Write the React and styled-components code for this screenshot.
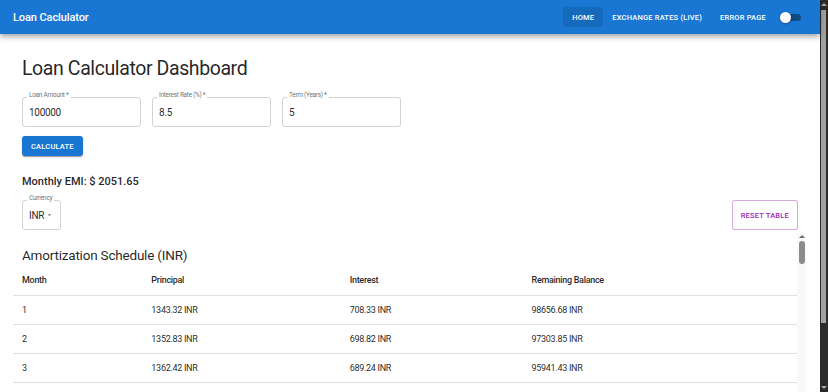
import React from "react";
import styled, { createGlobalStyle } from "styled-components";

const GlobalStyle = createGlobalStyle`
    html, body {
        margin:0;
        padding:0;
        height:100%;
        overflow:hidden;
        background:#fff;
        font-family:Roboto, "Liberation Sans", sans-serif;
        color:rgba(0,0,0,0.87);
    }
    #root{
        height:100%;
    }
`

const Shell = styled.div`
    display:flex;
    height:100%;
`

const Page = styled.div`
    flex:1;
    min-width:0;
    display:flex;
    flex-direction:column;
`

const AppBar = styled.header`
    flex:none;
    height:34px;
    background:#1976d2;
    color:#fff;
    display:flex;
    align-items:center;
    justify-content:space-between;
    padding:0 19px 0 13px;
    box-shadow:0 2px 4px -1px rgba(0,0,0,.2),0 4px 5px 0 rgba(0,0,0,.14),0 1px 10px 0 rgba(0,0,0,.12);
    position:relative;
    z-index:2;
`

const Brand = styled.div`
    font-size:11px;
    font-weight:500;
    letter-spacing:-0.1px;
`

const Nav = styled.nav`
    display:flex;
    align-items:center;
`

const NavButton = styled.button`
    height:20px;
    padding:0 9px;
    border:none;
    border-radius:3px;
    background:${p => p.$active ? "rgba(0,0,0,0.1)" : "transparent"};
    color:#fff;
    font-family:inherit;
    font-size:7.5px;
    font-weight:500;
    letter-spacing:0.2px;
    text-transform:uppercase;
`

const SwitchTrack = styled.span`
    position:relative;
    display:inline-block;
    width:21px;
    height:7px;
    border-radius:4px;
    background:rgba(0,0,0,0.38);
    margin-left:5px;
`

const SwitchThumb = styled.span`
    position:absolute;
    left:0;
    top:-2px;
    width:11px;
    height:11px;
    border-radius:50%;
    background:#fff;
    box-shadow:0 1px 2px rgba(0,0,0,.3);
`

const Main = styled.main`
    flex:1;
    min-height:0;
    display:flex;
    flex-direction:column;
    padding:23px 22px 0;
`

const PageTitle = styled.h1`
    margin:0;
    font-size:19.5px;
    font-weight:400;
    line-height:24px;
    letter-spacing:-0.4px;
`

const FieldRow = styled.div`
    display:flex;
    column-gap:11px;
    margin-top:16px;
`

const Field = styled.div`
    position:relative;
    box-sizing:border-box;
    width:${p => p.$width || 119}px;
    height:30px;
    border:1px solid #d2d2d2;
    border-radius:3px;
    display:flex;
    align-items:center;
    padding:0 6px;
    font-size:10px;
    letter-spacing:-0.3px;
`

const FieldLabel = styled.span`
    position:absolute;
    top:-7px;
    left:4px;
    padding:0 2px;
    background:#fff;
    font-size:6.5px;
    line-height:9px;
    color:rgba(0,0,0,0.6);
    white-space:nowrap;
    overflow:hidden;
    text-overflow:ellipsis;
    max-width:${p => p.$max ? p.$max + "px" : "none"};
`

const ContainedButton = styled.button`
    align-self:flex-start;
    margin-top:9px;
    height:20px;
    padding:0 9px;
    border:none;
    border-radius:3px;
    background:#1976d2;
    color:#fff;
    font-family:inherit;
    font-size:7.5px;
    font-weight:500;
    letter-spacing:0.2px;
    box-shadow:0 2px 1px -1px rgba(0,0,0,.2),0 1px 1px 0 rgba(0,0,0,.14),0 1px 3px 0 rgba(0,0,0,.12);
`

const Emi = styled.div`
    margin-top:18px;
    font-size:11px;
    font-weight:500;
    line-height:16px;
`

const ControlRow = styled.div`
    margin-top:10px;
    display:flex;
    justify-content:space-between;
    align-items:center;
`

const Caret = styled.svg`
    width:10px;
    height:10px;
    margin-left:1px;
    fill:rgba(0,0,0,0.54);
`

const OutlinedButton = styled.button`
    height:30px;
    padding:0 8px;
    border:1px solid rgba(156,39,176,0.4);
    border-radius:3px;
    background:#fff;
    color:#9c27b0;
    font-family:inherit;
    font-size:7.5px;
    font-weight:500;
    letter-spacing:0.2px;
`

const ScheduleBox = styled.section`
    flex:1;
    min-height:0;
    margin:3px -8px 0 -9px;
    display:flex;
    overflow:hidden;
`

const ScheduleContent = styled.div`
    flex:1;
    min-width:0;
`

const Rail = styled.div`
    flex:none;
    width:${p => p.$width}px;
    background:${p => p.$track};
    display:flex;
    flex-direction:column;
    align-items:center;
    padding:${p => p.$pad}px 0;
    box-sizing:border-box;
`

const RailArrow = styled.span`
    width:0;
    height:0;
    border-left:3px solid transparent;
    border-right:3px solid transparent;
    ${p => p.$down ? "border-top" : "border-bottom"}:3px solid ${p => p.$color};
`

const RailThumb = styled.span`
    width:${p => p.$width}px;
    height:${p => p.$height}px;
    margin-top:${p => p.$offset}px;
    margin-left:${p => p.$shift || 0}px;
    border-radius:${p => p.$round ? 3 : 0}px;
    background:${p => p.$color};
`

const RailSpacer = styled.span`
    flex:1;
`

const SectionTitle = styled.h2`
    margin:0;
    padding:12px 9px 0;
    font-size:13.5px;
    font-weight:400;
    line-height:20px;
    letter-spacing:-0.2px;
`

const Table = styled.table`
    width:100%;
    border-collapse:collapse;
    table-layout:fixed;
`

const Th = styled.th`
    box-sizing:border-box;
    width:${p => p.$w};
    height:30px;
    padding:0 9px;
    text-align:left;
    font-size:9px;
    font-weight:500;
    letter-spacing:-0.3px;
    border-bottom:1px solid #e0e0e0;
`

const Td = styled.td`
    height:28px;
    padding:0 9px;
    font-size:9px;
    letter-spacing:-0.3px;
    color:rgba(0,0,0,0.87);
    border-bottom:1px solid #e0e0e0;
`

const buildSchedule = (amount, rate, years) => {
    const r = rate / 12 / 100;
    const n = years * 12;
    const emi = amount * r * Math.pow(1 + r, n) / (Math.pow(1 + r, n) - 1);
    let balance = amount;
    const rows = [];
    for (let m = 1; m <= n; m++) {
        const interest = balance * r;
        const principal = emi - interest;
        balance -= principal;
        rows.push({ month: m, principal, interest, balance: Math.max(balance, 0) });
    }
    return { emi, rows };
}

const App = () => {
    const { emi, rows } = buildSchedule(100000, 8.5, 5);
    // only the rows that fit above the fold
    const visible = rows.slice(0, 3);

    return (
        <Shell>
            <GlobalStyle />
            <Page>
                <AppBar>
                    <Brand>Loan Caclulator</Brand>
                    <Nav>
                        <NavButton $active>Home</NavButton>
                        <NavButton>Exchange Rates (Live)</NavButton>
                        <NavButton>Error Page</NavButton>
                        <SwitchTrack><SwitchThumb /></SwitchTrack>
                    </Nav>
                </AppBar>
                <Main>
                    <PageTitle>Loan Calculator Dashboard</PageTitle>

                    <FieldRow>
                        <Field><FieldLabel>Loan Amount *</FieldLabel>100000</Field>
                        <Field><FieldLabel>Interest Rate (%) *</FieldLabel>8.5</Field>
                        <Field><FieldLabel>Term (Years) *</FieldLabel>5</Field>
                    </FieldRow>

                    <ContainedButton>CALCULATE</ContainedButton>

                    <Emi>Monthly EMI: $ {emi.toFixed(2)}</Emi>

                    <ControlRow>
                        <Field $width={39}>
                            <FieldLabel $max={24}>Currency</FieldLabel>
                            INR
                            <Caret viewBox="0 0 24 24"><path d="M7 10l5 5 5-5z" /></Caret>
                        </Field>
                        <OutlinedButton>RESET TABLE</OutlinedButton>
                    </ControlRow>

                    <ScheduleBox>
                        <ScheduleContent>
                            <SectionTitle>Amortization Schedule (INR)</SectionTitle>
                            <Table>
                                <thead>
                                    <tr>
                                        <Th $w="16.5%">Month</Th>
                                        <Th $w="25.3%">Principal</Th>
                                        <Th $w="23.2%">Interest</Th>
                                        <Th $w="35%">Remaining Balance</Th>
                                    </tr>
                                </thead>
                                <tbody>
                                    {visible.map(row => (
                                        <tr key={row.month}>
                                            <Td>{row.month}</Td>
                                            <Td>{row.principal.toFixed(2)} INR</Td>
                                            <Td>{row.interest.toFixed(2)} INR</Td>
                                            <Td>{row.balance.toFixed(2)} INR</Td>
                                        </tr>
                                    ))}
                                </tbody>
                            </Table>
                        </ScheduleContent>
                        <Rail $width={9} $track="#f9f9f9" $pad={2}>
                            <RailArrow $color="#6a6a6a" />
                            <RailThumb $width={6} $height={23} $offset={3} $round $color="#8c8c8c" />
                        </Rail>
                    </ScheduleBox>
                </Main>
            </Page>
            <Rail $width={8} $track="#2b2b2b" $pad={3}>
                <RailArrow $color="#a8a8a8" />
                <RailThumb $width={5} $height={313} $offset={4} $shift={-1} $color="#a2a2a2" />
                <RailSpacer />
                <RailArrow $down $color="#a8a8a8" />
            </Rail>
        </Shell>
    )
}

export default App;
